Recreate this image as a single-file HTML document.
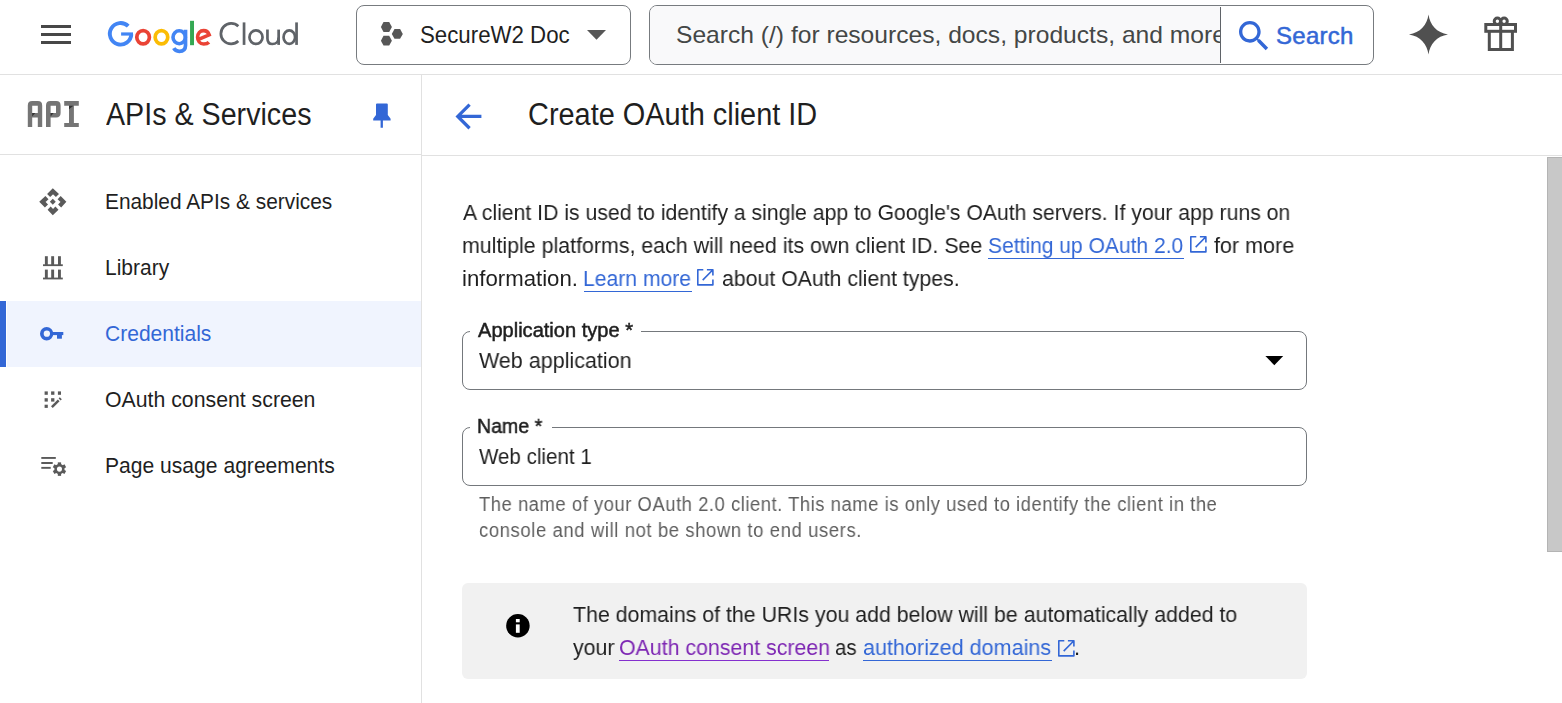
<!DOCTYPE html>
<html><head><meta charset="utf-8">
<style>
*{box-sizing:border-box;margin:0;padding:0}
html,body{width:1562px;height:703px;overflow:hidden;background:#fff;-webkit-font-smoothing:antialiased;font-family:"Liberation Sans",sans-serif;color:#1f1f1f}
.a{position:absolute;white-space:nowrap}
.g{will-change:transform}
.r{position:absolute}
svg{position:absolute;overflow:visible}
</style></head><body>

<!-- ===== lines ===== -->
<div class="r" style="left:0;top:74px;width:1562px;height:1px;background:#e1e1e1"></div>
<div class="r" style="left:421px;top:75px;width:1px;height:628px;background:#e1e1e1"></div>
<div class="r" style="left:0;top:154px;width:421px;height:1px;background:#e1e1e1"></div>
<div class="r" style="left:422px;top:155px;width:1140px;height:1px;background:#e1e1e1"></div>

<!-- ===== header ===== -->
<div class="r" style="left:41px;top:25px;width:30px;height:3px;background:#474747"></div>
<div class="r" style="left:41px;top:33px;width:30px;height:3px;background:#474747"></div>
<div class="r" style="left:41px;top:41px;width:30px;height:3px;background:#474747"></div>

<!-- Google logo -->
<svg style="left:0;top:0" width="320" height="74" viewBox="0 0 320 74">
  <!-- G -->
  <path fill="none" stroke="#4285f4" stroke-width="3.9" d="M128.20 26.20 A10.75 10.75 0 1 0 131.33 34.40"/>
  <rect x="121.1" y="32.4" width="11.9" height="3.2" fill="#4285f4"/>
  <!-- o o -->
  <ellipse cx="143.1" cy="37.25" rx="6.3" ry="6.65" fill="none" stroke="#ea4335" stroke-width="3.7"/>
  <ellipse cx="161.45" cy="37.25" rx="6.3" ry="6.65" fill="none" stroke="#fbbc04" stroke-width="3.7"/>
  <!-- g -->
  <ellipse cx="179.2" cy="37.25" rx="6.2" ry="6.5" fill="none" stroke="#4285f4" stroke-width="3.6"/>
  <path fill="none" stroke="#4285f4" stroke-width="3.7" d="M185.5 29.8 V45.5 C185.5 49.5 183 51.3 179.2 51.3 C176.3 51.3 174.6 49.8 173.8 48.2"/>
  <!-- l -->
  <rect x="190.05" y="20.8" width="3.95" height="24.4" fill="#34a853"/>
  <!-- e -->
  <path fill="none" stroke="#ea4335" stroke-width="3.6" d="M208.9 42.2 C207.6 43.6 205.6 44 203.7 44 C199.8 44 197.6 40.8 197.6 37.2 C197.6 33.2 200.2 30.6 203.6 30.6 C206.3 30.6 208.3 32.3 209.2 34.8 L198.6 39.3"/>
  <!-- Cloud -->
  <path fill="none" stroke="#5f6368" stroke-width="2.75" d="M238.3 26.2 A10.3 10.3 0 1 0 238.3 41.1"/>
  <rect x="242.7" y="22.4" width="2.7" height="22.5" fill="#5f6368"/>
  <ellipse cx="256" cy="37.15" rx="6.55" ry="6.8" fill="none" stroke="#5f6368" stroke-width="2.7"/>
  <path fill="none" stroke="#5f6368" stroke-width="2.7" d="M267.45 29.6 V38.5 C267.45 42.2 269.5 44 272.4 44 C275.8 44 278.65 41.6 278.65 37.4"/>
  <rect x="277.3" y="29.6" width="2.7" height="15.3" fill="#5f6368"/>
  <ellipse cx="289.3" cy="37.15" rx="5.75" ry="6.8" fill="none" stroke="#5f6368" stroke-width="2.7"/>
  <rect x="295.2" y="22.4" width="2.7" height="22.5" fill="#5f6368"/>
</svg>

<!-- project picker -->
<div class="r" style="left:356px;top:5px;width:275px;height:60px;border:1px solid #777b7f;border-radius:8px"></div>
<svg style="left:380px;top:21px" width="24" height="26" viewBox="0 0 24 26">
  <polygon fill="#575757" points="3.5,1.1 9.2,1.1 11.9,6.1 9.2,11.1 3.5,11.1 0.9,6.1"/>
  <polygon fill="#575757" points="3.5,14.7 9.2,14.7 11.9,19.7 9.2,24.6 3.5,24.6 0.9,19.7"/>
  <polygon fill="#575757" points="14.5,7.9 20.1,7.9 22.8,12.9 20.1,17.8 14.5,17.8 11.8,12.9"/>
</svg>
<svg style="left:587px;top:30px" width="20" height="10" viewBox="0 0 20 10"><polygon fill="#575757" points="0,0 19,0 9.5,9.8"/></svg>

<!-- search -->
<div class="r" style="left:649px;top:5px;width:725px;height:60px;border:1px solid #777b7f;border-radius:8px;background:#fff;overflow:hidden">
  <div class="r" style="left:0;top:0;width:570px;height:58px;background:#f9f9fa"></div>
  <div class="r" style="left:570px;top:1px;width:1px;height:56px;background:#5f6368"></div>
  <div class="r" style="left:0;top:0;width:570px;height:58px;overflow:hidden">
    <div class="a" id="stext" style="left:26.37px;top:14.18px;font-size:24px;line-height:30px;transform:scaleX(1.0254);transform-origin:0 0;color:#444746;">Search (/) for resources, docs, products, and more</div>
  </div>
</div>
<svg style="left:1234px;top:16px" width="40" height="40" viewBox="0 0 24 24"><path fill="#3367d6" d="M15.5 14h-.79l-.28-.27C15.41 12.59 16 11.11 16 9.5 16 5.91 13.090 3 9.5 3S3 5.91 3 9.5 5.91 16 9.5 16c1.61 0 3.09-.59 4.23-1.57l.27.28v.79l5 4.99L20.49 19l-4.99-5zm-6 0C7.01 14 5 11.99 5 9.5S7.01 5 9.5 5 14 7.01 14 9.5 11.99 14 9.5 14z"/></svg>

<!-- spark -->
<svg style="left:1408px;top:14px" width="41" height="41" viewBox="0 0 41 41">
  <path fill="#505050" d="M20.5 0.6 C21.9 11 28.8 18.9 40 20.5 C28.8 22.1 21.9 30 20.5 40.5 C19.1 30 12.2 22.1 1 20.5 C12.2 18.9 19.1 11 20.5 0.6Z"/>
</svg>
<!-- gift -->
<svg style="left:1483px;top:15px" width="36" height="38" viewBox="0 0 36 38">
  <g fill="none" stroke="#505050" stroke-width="3">
    <rect x="2.8" y="9.5" width="29.7" height="6.8"/>
    <path d="M6.3 16.3 V34.4 H29.4 V16.3"/>
    <path d="M17.7 9.5 V34.4"/>
    <circle cx="14.4" cy="6.3" r="3.2"/>
    <circle cx="21.1" cy="6.3" r="3.2"/>
  </g>
</svg>

<!-- ===== nav ===== -->
<!-- API logo -->
<svg style="left:0;top:0" width="90" height="140" viewBox="0 0 90 140">
  <path fill="#757575" fill-rule="evenodd" d="M27.8 127 V105.5 Q27.8 101.1 32.2 101.1 H37.8 Q42.2 101.1 42.2 105.5 V127 H37.8 V117.5 H32.2 V127 Z M32.2 105.7 V112.9 H37.8 V105.7 Z"/>
  <path fill="#757575" fill-rule="evenodd" d="M46 127 V105.5 Q46 101.1 50.4 101.1 H56.2 Q60.6 101.1 60.6 105.5 V113.1 Q60.6 117.5 56.2 117.5 H50.6 V127 Z M50.6 105.7 V112.9 H56 V105.7 Z"/>
  <path fill="#757575" d="M64.2 101.1 H78.8 V105.7 H73.9 V122.9 H78.8 V127 H64.2 V122.9 H69 V105.7 H64.2 Z"/>
  <path fill="#333" d="M32.2 112.9 L35.3 112.9 L32.2 116.4Z M50.6 112.9 L53.7 112.9 L50.6 116.4Z M69 105.7 L73.4 105.7 L69 109.2Z"/>
</svg>
<!-- pin -->
<svg style="left:0;top:0" width="400" height="140" viewBox="0 0 400 140">
  <path fill="#3367d6" d="M377 103.4 H386.8 Q387.8 103.4 387.8 104.4 V114.9 L390.6 118.7 V120.5 H382.9 V127.7 H380.6 V120.5 H373.2 V118.7 L376 114.9 V104.4 Q376 103.4 377 103.4Z"/>
</svg>

<!-- credentials highlight -->
<div class="r" style="left:7px;top:301px;width:414px;height:66px;background:#f0f4fe"></div>
<div class="r" style="left:0;top:301px;width:6px;height:66px;background:#3367d6"></div>

<!-- nav icons -->
<svg style="left:37.9px;top:187px" width="29.6" height="29.6" viewBox="0 0 24 24"><path fill="#5a5a5a" d="M14.4 12l-2.4 2.4-2.4-2.4 2.4-2.4 2.4 2.4zm-2-6l2.12 2.12 2.5-2.5L12 1 7.38 5.62l2.5 2.5L12 6zm-6 6l2.12-2.12-2.5-2.5L1 12l4.620 4.62 2.5-2.5L6 12zm12 0l-2.12 2.12 2.5 2.5L23 12l-4.62-4.62-2.5 2.5L18 12zm-6 6l-2.12-2.12-2.5 2.5L12 23l4.62-4.62-2.5-2.5L12 18z"/></svg>
<svg style="left:0;top:0" width="80" height="500" viewBox="0 0 80 500">
  <g fill="#5a5a5a">
    <!-- library -->
    <rect x="44.9" y="256.2" width="2.9" height="9"/><rect x="51.2" y="256.2" width="2.9" height="9"/><rect x="58" y="256.2" width="2.9" height="9"/>
    <rect x="43" y="264.3" width="19.8" height="1.8"/>
    <rect x="44.9" y="269.6" width="2.9" height="9"/><rect x="51.2" y="269.6" width="2.9" height="9"/><rect x="58" y="269.6" width="2.9" height="9"/>
    <rect x="43" y="277.6" width="19.8" height="1.8"/>
    <!-- oauth consent -->
    <rect x="44.6" y="391.4" width="3.2" height="3.4"/><rect x="51.1" y="391.4" width="3.3" height="3.4"/><rect x="57.9" y="391.4" width="3.1" height="3.4"/>
    <rect x="44.6" y="398.2" width="3.2" height="3.4"/><rect x="51.1" y="398.2" width="3.3" height="3.4"/>
    <rect x="44.6" y="404.7" width="3.2" height="3.2"/>
    
    
    </g><g stroke="#5a5a5a" fill="none">
    <path d="M51.9 407.2 L58.7 400.4" stroke-width="2.5"/>
    <path d="M59.2 397.9 L61.2 399.9" stroke-width="1.7"/>
  </g><g fill="#5a5a5a">
    <!-- page usage -->
    <rect x="41.3" y="457" width="14.5" height="1.9"/>
    <rect x="41.3" y="462" width="11.4" height="2"/>
    <rect x="41.3" y="466.9" width="9.4" height="1.9"/>
  </g>
  <g transform="translate(59.45 469.1)" fill="#5a5a5a">
    <circle r="5.1"/><rect x="-1.65" y="-6.75" width="3.3" height="4" transform="rotate(0)"/><rect x="-1.65" y="-6.75" width="3.3" height="4" transform="rotate(60)"/><rect x="-1.65" y="-6.75" width="3.3" height="4" transform="rotate(120)"/><rect x="-1.65" y="-6.75" width="3.3" height="4" transform="rotate(180)"/><rect x="-1.65" y="-6.75" width="3.3" height="4" transform="rotate(240)"/><rect x="-1.65" y="-6.75" width="3.3" height="4" transform="rotate(300)"/>
    <circle r="2.55" fill="#fff"/>
  </g>
  <!-- key -->
  <g fill="#3367d6">
    <path fill-rule="evenodd" d="M46.65 327 A6.65 6.7 0 1 1 46.65 340.4 A6.65 6.7 0 1 1 46.65 327Z M46.85 330.6 A3.15 3.1 0 1 0 46.85 336.8 A3.15 3.1 0 1 0 46.85 330.6Z"/>
    <rect x="52" y="332" width="11.3" height="3.1"/>
    <rect x="57" y="334" width="4.9" height="4.7"/>
  </g>
</svg>

<!-- ===== main ===== -->
<svg style="left:449.4px;top:97px" width="38.9" height="38.9" viewBox="0 0 24 24"><path fill="#3367d6" d="M20 11H7.83l5.59-5.59L12 4l-8 8 8 8 1.41-1.41L7.83 13H20v-2z"/></svg>

<!-- scrollbar -->
<div class="r" style="left:1547px;top:157px;width:15px;height:395px;background:#c8c8c8;border:1px solid #b4b4b4;border-right:none"></div>

<!-- info box bg -->
<div class="r" style="left:462px;top:583px;width:845px;height:96px;background:#f1f1f1;border-radius:6px"></div>
<!-- links underlines -->
<div class="r" style="left:988px;top:258px;width:196px;height:1px;background:#3367d6"></div>
<div class="r" style="left:584px;top:290.5px;width:108px;height:1px;background:#3367d6"></div>
<div class="r" style="left:619px;top:660px;width:210px;height:1px;background:#8430ce"></div>
<div class="r" style="left:863px;top:660px;width:189px;height:1px;background:#3367d6"></div>

<!-- external link icons -->
<svg style="left:1189.5px;top:236.3px" width="18" height="18" viewBox="0 0 18 18"><path fill="none" stroke="#3367d6" stroke-width="1.6" stroke-linejoin="round" d="M6.3 0.8 H0.8 V15.9 H15.9 V10.5 M9.9 0.8 H15.9 V6.4 M15.9 0.8 L5.7 11.1"/></svg>
<svg style="left:697.3px;top:269.2px" width="18" height="18" viewBox="0 0 18 18"><path fill="none" stroke="#3367d6" stroke-width="1.6" stroke-linejoin="round" d="M6.3 0.8 H0.8 V15.9 H15.9 V10.5 M9.9 0.8 H15.9 V6.4 M15.9 0.8 L5.7 11.1"/></svg>
<svg style="left:1057.7px;top:639.5px" width="18" height="18" viewBox="0 0 18 18"><path fill="none" stroke="#3367d6" stroke-width="1.6" stroke-linejoin="round" d="M6.3 0.8 H0.8 V15.9 H15.9 V10.5 M9.9 0.8 H15.9 V6.4 M15.9 0.8 L5.7 11.1"/></svg>

<!-- Application type field -->
<div class="r" style="left:462px;top:331px;width:845px;height:59px;border:1px solid #74787c;border-radius:8px"></div>
<div class="r" style="left:470px;top:329px;width:171px;height:4px;background:#fff"></div>
<svg style="left:1265px;top:355.5px" width="18" height="10" viewBox="0 0 18 10"><polygon fill="#000" points="0.4,0.1 18.2,0.1 9.3,9.2"/></svg>

<!-- Name field -->
<div class="r" style="left:462px;top:427px;width:845px;height:59px;border:1px solid #74787c;border-radius:8px"></div>
<div class="r" style="left:470px;top:425px;width:82px;height:4px;background:#fff"></div>

<!-- info box -->
<svg style="left:500px;top:608px" width="36" height="36" viewBox="0 0 36 36"><circle cx="17.9" cy="17.8" r="11.75" fill="#000"/><rect x="15.9" y="16.4" width="3.8" height="8.4" fill="#fff"/><rect x="15.9" y="11" width="3.8" height="3.3" fill="#fff"/></svg>

<div class="a" id="proj" style="left:420.05px;top:21.36px;font-size:23.5px;line-height:29px;transform:scaleX(0.9474);transform-origin:0 0;color:#1f1f1f;">SecureW2 Doc</div>
<div class="a" id="sbtn" style="left:1276.00px;top:21.48px;font-size:24px;line-height:30px;letter-spacing:0.261px;color:#3367d6;-webkit-text-stroke:0.5px #3367d6;">Search</div>
<div class="a" id="navtitle" style="left:106.00px;top:94.56px;font-size:31px;line-height:39px;transform:scaleX(0.9245);transform-origin:0 0;color:#1f1f1f;">APIs &amp; Services</div>
<div class="a" id="title" style="left:528.07px;top:94.76px;font-size:31px;line-height:39px;transform:scaleX(0.9326);transform-origin:0 0;color:#1f1f1f;">Create OAuth client ID</div>
<div class="a" id="n1" style="left:105.45px;top:188.38px;font-size:22px;line-height:28px;transform:scaleX(0.9483);transform-origin:0 0;color:#1f1f1f;">Enabled APIs &amp; services</div>
<div class="a" id="n2" style="left:105.45px;top:254.38px;font-size:22px;line-height:28px;transform:scaleX(0.9540);transform-origin:0 0;color:#1f1f1f;">Library</div>
<div class="a" id="n3" style="left:105.44px;top:320.38px;font-size:22px;line-height:28px;transform:scaleX(0.9558);transform-origin:0 0;color:#3367d6;">Credentials</div>
<div class="a" id="n4" style="left:105.43px;top:386.38px;font-size:22px;line-height:28px;transform:scaleX(0.9668);transform-origin:0 0;color:#1f1f1f;">OAuth consent screen</div>
<div class="a" id="n5" style="left:105.44px;top:452.38px;font-size:22px;line-height:28px;transform:scaleX(0.9584);transform-origin:0 0;color:#1f1f1f;">Page usage agreements</div>
<div class="a g" id="p1" style="left:462.80px;top:199.28px;font-size:22px;line-height:28px;transform:scaleX(0.9630);transform-origin:0 0;color:#1f1f1f;">A client ID is used to identify a single app to Google's OAuth servers. If your app runs on</div>
<div class="a g" id="p2a" style="left:461.83px;top:232.38px;font-size:22px;line-height:28px;transform:scaleX(0.9715);transform-origin:0 0;color:#1f1f1f;">multiple platforms, each will need its own client ID. See</div>
<div class="a g" id="p2b" style="left:988.04px;top:232.38px;font-size:22px;line-height:28px;transform:scaleX(0.9556);transform-origin:0 0;color:#3367d6;">Setting up OAuth 2.0</div>
<div class="a g" id="p2c" style="left:1214.00px;top:232.38px;font-size:22px;line-height:28px;transform:scaleX(0.9795);transform-origin:0 0;color:#1f1f1f;">for more</div>
<div class="a g" id="p3a" style="left:462.09px;top:264.98px;font-size:22px;line-height:28px;transform:scaleX(1.0086);transform-origin:0 0;color:#1f1f1f;">information.</div>
<div class="a g" id="p3b" style="left:583.44px;top:264.98px;font-size:22px;line-height:28px;transform:scaleX(0.9598);transform-origin:0 0;color:#3367d6;">Learn more</div>
<div class="a g" id="p3c" style="left:721.50px;top:264.98px;font-size:22px;line-height:28px;transform:scaleX(0.9665);transform-origin:0 0;color:#1f1f1f;">about OAuth client types.</div>
<div class="a g" id="l1" style="left:477.80px;top:317.97px;font-size:20px;line-height:25px;transform:scaleX(1.0029);transform-origin:0 0;color:#1f1f1f;-webkit-text-stroke:0.5px #1f1f1f;">Application type *</div>
<div class="a g" id="v1" style="left:478.70px;top:347.28px;font-size:22px;line-height:28px;transform:scaleX(0.9767);transform-origin:0 0;color:#1f1f1f;">Web application</div>
<div class="a g" id="l2" style="left:477.32px;top:414.37px;font-size:20px;line-height:25px;transform:scaleX(0.9771);transform-origin:0 0;color:#1f1f1f;-webkit-text-stroke:0.5px #1f1f1f;">Name *</div>
<div class="a g" id="v2" style="left:479.00px;top:443.18px;font-size:22px;line-height:28px;transform:scaleX(0.9342);transform-origin:0 0;color:#1f1f1f;">Web client 1</div>
<div class="a g" id="h1" style="left:479.00px;top:491.57px;font-size:20px;line-height:25px;letter-spacing:0.591px;transform:scaleX(0.9200);transform-origin:0 0;color:#5e5e5e;">The name of your OAuth 2.0 client. This name is only used to identify the client in the</div>
<div class="a g" id="h2" style="left:479.00px;top:517.57px;font-size:20px;line-height:25px;letter-spacing:0.685px;transform:scaleX(0.9200);transform-origin:0 0;color:#5e5e5e;">console and will not be shown to end users.</div>
<div class="a g" id="i1" style="left:573.00px;top:600.78px;font-size:22px;line-height:28px;transform:scaleX(0.9699);transform-origin:0 0;color:#1f1f1f;">The domains of the URIs you add below will be automatically added to</div>
<div class="a g" id="i2a" style="left:572.50px;top:634.18px;font-size:22px;line-height:28px;transform:scaleX(0.9677);transform-origin:0 0;color:#1f1f1f;">your</div>
<div class="a g" id="i2b" style="left:619.03px;top:634.18px;font-size:22px;line-height:28px;transform:scaleX(0.9692);transform-origin:0 0;color:#7d26b3;">OAuth consent screen</div>
<div class="a g" id="i2c" style="left:835.00px;top:634.18px;font-size:22px;line-height:28px;transform:scaleX(0.9296);transform-origin:0 0;color:#1f1f1f;">as</div>
<div class="a g" id="i2d" style="left:863.30px;top:634.18px;font-size:22px;line-height:28px;transform:scaleX(0.9797);transform-origin:0 0;color:#3367d6;">authorized domains</div>
<div class="a g" id="i2e" style="left:1074.30px;top:634.18px;font-size:22px;line-height:28px;color:#1f1f1f;">.</div>

</body></html>
